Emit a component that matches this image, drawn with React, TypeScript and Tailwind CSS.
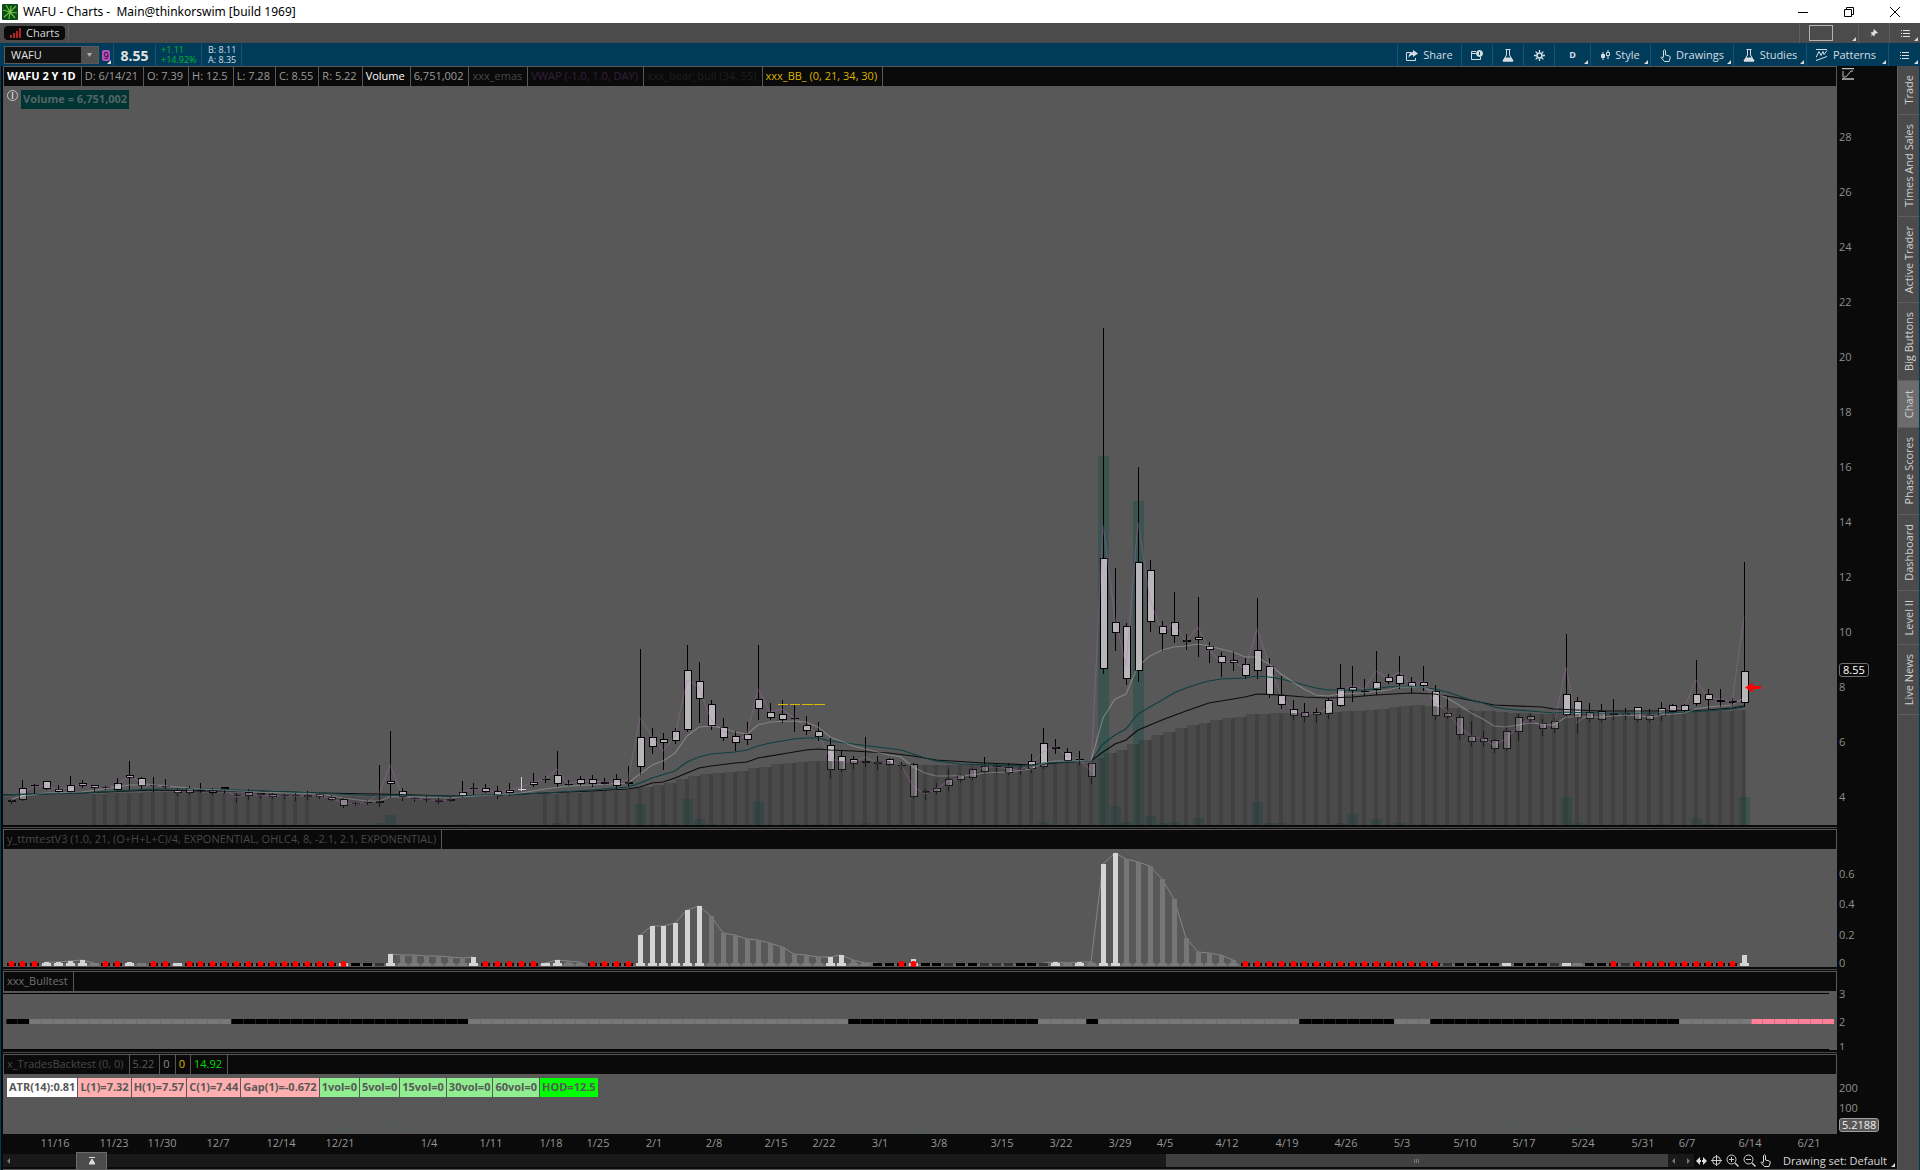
import React, { useState } from 'react';

type Candle = [high: number, top: number, bottom: number, low: number];
type Point = [index: number, y: number];

const CANDLES: Candle[] = [
  [799, 800, 802, 803], [780, 788, 800, 800], [784, 785, 786, 793], [781, 781, 789, 789], [785, 789, 792, 793],
  [776, 785, 792, 793], [780, 783, 786, 787], [785, 785, 788, 791], [786, 787, 788, 789], [778, 783, 790, 790],
  [761, 775, 778, 789], [777, 778, 786, 788], [777, 785, 786, 791], [779, 786, 787, 788], [788, 790, 793, 795],
  [786, 788, 793, 794], [783, 790, 791, 792], [788, 790, 793, 794], [787, 787, 789, 792], [793, 795, 796, 802],
  [789, 792, 796, 799], [793, 793, 795, 798], [793, 794, 797, 798], [794, 795, 796, 798], [793, 795, 796, 800],
  [791, 795, 797, 799], [793, 794, 797, 798], [795, 797, 800, 800], [798, 799, 806, 807], [802, 803, 804, 805],
  [800, 802, 803, 804], [765, 801, 803, 806], [731, 781, 784, 797], [788, 791, 797, 800], [797, 798, 799, 801],
  [796, 799, 800, 801], [798, 800, 802, 803], [797, 799, 801, 801], [781, 792, 796, 797], [783, 788, 789, 794],
  [784, 788, 792, 792], [786, 791, 796, 798], [783, 790, 793, 795], [777, 789, 790, 790], [773, 782, 785, 786],
  [776, 779, 780, 782], [751, 775, 784, 786], [780, 784, 785, 785], [776, 779, 784, 785], [775, 779, 784, 786],
  [778, 782, 784, 784], [774, 779, 786, 789], [766, 782, 784, 786], [649, 737, 767, 774], [728, 737, 747, 753],
  [733, 739, 743, 769], [728, 731, 741, 743], [645, 670, 730, 731], [662, 681, 699, 722], [700, 704, 726, 729],
  [718, 727, 738, 740], [731, 736, 743, 750], [722, 734, 740, 744], [645, 699, 709, 719], [703, 712, 718, 719],
  [700, 714, 720, 722], [705, 718, 719, 731], [716, 725, 731, 734], [722, 731, 737, 740], [738, 745, 770, 778],
  [751, 756, 770, 771], [756, 759, 764, 768], [737, 761, 763, 766], [756, 762, 764, 769], [758, 759, 765, 765],
  [762, 765, 766, 768], [763, 764, 797, 798], [789, 791, 793, 799], [783, 788, 792, 793], [769, 779, 786, 790],
  [774, 775, 780, 782], [768, 769, 778, 779], [757, 766, 772, 773], [763, 765, 767, 773], [763, 767, 773, 774],
  [765, 769, 770, 774], [754, 761, 769, 772], [728, 743, 767, 768], [739, 747, 749, 753], [748, 752, 761, 762],
  [751, 759, 760, 764], [760, 763, 777, 783], [328, 558, 669, 673], [568, 622, 633, 650], [623, 626, 679, 684],
  [467, 562, 671, 681], [560, 570, 622, 631], [621, 626, 634, 650], [592, 622, 636, 642], [634, 640, 642, 649],
  [597, 637, 640, 656], [642, 646, 650, 662], [652, 656, 663, 676], [651, 660, 663, 670], [658, 664, 676, 678],
  [598, 650, 671, 678], [658, 666, 695, 697], [676, 695, 705, 708], [700, 709, 716, 719], [703, 712, 717, 721],
  [708, 712, 715, 722], [698, 700, 714, 718], [664, 688, 706, 706], [666, 687, 691, 701], [679, 691, 692, 695],
  [651, 682, 690, 694], [674, 677, 682, 683], [656, 675, 684, 688], [677, 682, 687, 692], [666, 682, 686, 690],
  [685, 691, 716, 719], [697, 713, 717, 718], [715, 717, 735, 739], [721, 736, 742, 746], [731, 738, 742, 746],
  [739, 740, 749, 752], [727, 731, 749, 750], [714, 717, 732, 740], [714, 716, 720, 722], [719, 723, 729, 735],
  [718, 721, 729, 732], [634, 694, 715, 716], [697, 701, 718, 733], [703, 712, 719, 721], [704, 711, 720, 721],
  [699, 713, 715, 719], [708, 713, 715, 719], [707, 707, 720, 721], [709, 715, 720, 721], [702, 708, 716, 720],
  [704, 705, 712, 713], [704, 705, 711, 712], [660, 694, 704, 705], [689, 694, 700, 709], [689, 700, 702, 706],
  [698, 701, 703, 705], [562, 671, 703, 706],
];

const VWAP_PEAKS: Record<number, number> = {
  32: 765, 46: 769, 53: 718, 54: 736, 55: 751, 57: 680, 58: 687, 59: 720, 63: 689, 64: 712, 65: 709, 76: 786, 77: 794,
  92: 525, 93: 618, 94: 666, 95: 522, 96: 600, 97: 632, 98: 623, 99: 642, 100: 627, 105: 629, 106: 664, 115: 671,
  117: 672, 131: 667, 132: 723, 142: 680, 146: 617,
};

const FAST_EMA: Point[] = [
  [0, 799], [1, 796], [3, 793], [6, 792], [9, 787], [10, 785], [12, 785], [14, 787], [16, 789], [18, 790], [21, 792],
  [24, 793], [26, 794], [28, 798], [30, 801], [31, 801], [32, 797], [34, 797], [37, 798], [39, 796], [41, 795],
  [43, 793], [44, 791], [45, 789], [47, 786], [49, 785], [52, 783], [53, 774], [54, 765], [55, 761], [56, 753],
  [57, 736], [58, 727], [59, 726], [60, 728], [61, 732], [62, 734], [63, 725], [64, 722], [66, 721], [67, 722],
  [68, 727], [69, 737], [70, 741], [71, 746], [72, 749], [73, 752], [74, 755], [75, 757], [76, 767], [77, 773],
  [78, 776], [79, 776], [81, 775], [82, 773], [84, 772], [86, 769], [87, 763], [88, 761], [91, 761], [92, 718],
  [93, 699], [94, 694], [95, 666], [96, 656], [97, 650], [98, 647], [99, 646], [100, 644], [101, 646], [102, 649],
  [103, 652], [104, 657], [105, 657], [106, 664], [107, 674], [108, 682], [109, 689], [110, 695], [111, 696],
  [112, 694], [114, 693], [116, 690], [117, 687], [119, 687], [120, 692], [121, 698], [122, 705], [123, 713],
  [124, 719], [125, 726], [126, 727], [127, 725], [128, 723], [130, 725], [131, 717], [134, 717], [136, 715],
  [138, 717], [140, 714], [141, 713], [142, 709], [143, 707], [145, 705], [146, 698],
];

const MID_EMA: Point[] = [
  [-1, 795], [6, 793], [12, 789], [17, 789], [21, 791], [26, 793], [31, 796], [32, 795], [37, 796], [41, 795],
  [45, 793], [49, 790], [52, 787], [53, 783], [54, 778], [56, 771], [57, 762], [58, 757], [59, 754], [61, 752],
  [62, 750], [63, 746], [64, 743], [66, 739], [67, 738], [68, 738], [69, 741], [71, 744], [73, 747], [75, 750],
  [76, 754], [77, 758], [78, 761], [80, 764], [85, 766], [86, 766], [87, 763], [91, 761], [92, 744], [93, 735],
  [94, 729], [95, 714], [96, 707], [97, 700], [98, 693], [99, 688], [100, 684], [101, 681], [102, 679], [104, 678],
  [105, 676], [106, 677], [107, 679], [108, 682], [109, 685], [110, 688], [111, 690], [114, 690], [116, 687],
  [118, 686], [120, 689], [121, 692], [123, 700], [124, 703], [125, 707], [126, 709], [130, 713], [131, 712],
  [133, 713], [139, 713], [141, 712], [143, 711], [145, 709], [146, 707],
];

const SLOW_EMA: Point[] = [
  [-1, 795], [6, 793], [10, 791], [12, 790], [16, 791], [21, 791], [26, 793], [31, 794], [37, 796], [41, 795],
  [45, 793], [49, 791], [52, 789], [53, 787], [54, 783], [55, 782], [56, 778], [57, 773], [58, 768], [59, 766],
  [61, 763], [62, 762], [63, 758], [65, 754], [67, 750], [68, 749], [69, 750], [71, 751], [74, 753], [76, 756],
  [78, 760], [82, 763], [86, 765], [88, 763], [91, 761], [92, 752], [93, 744], [94, 740], [95, 730], [97, 720],
  [99, 711], [101, 703], [103, 699], [104, 697], [105, 694], [107, 695], [109, 697], [111, 698], [113, 697],
  [115, 695], [118, 693], [120, 694], [121, 696], [122, 698], [125, 705], [129, 707], [130, 709], [134, 711],
  [139, 711], [143, 710], [145, 708], [146, 706],
];

const CLOUD: Point[] = [
  [-1, 797], [6, 794], [10, 793], [12, 792], [21, 793], [26, 795], [31, 797], [37, 797], [41, 796], [45, 794],
  [49, 792], [52, 790], [53, 788], [54, 787], [55, 785], [56, 783], [57, 779], [58, 776], [59, 774], [61, 772],
  [62, 771], [63, 768], [64, 767], [65, 764], [67, 762], [68, 761], [74, 761], [76, 764], [78, 765], [86, 765],
  [88, 763], [91, 763], [92, 758], [93, 753], [94, 750], [95, 744], [96, 740], [97, 735], [98, 732], [99, 728],
  [100, 725], [101, 723], [102, 720], [103, 718], [104, 717], [105, 714], [108, 713], [111, 713], [113, 711],
  [115, 710], [117, 707], [119, 705], [120, 706], [122, 708], [123, 710], [126, 712], [130, 714], [142, 712],
  [146, 710],
];

const VOLUME: Point[] = [
  [10, 824], [31, 823], [32, 815], [38, 824], [46, 823], [53, 804], [55, 824], [57, 799], [58, 819], [59, 824],
  [63, 801], [66, 824], [68, 824], [72, 823], [87, 822], [92, 456], [93, 806], [94, 822], [95, 501], [96, 816],
  [97, 823], [98, 822], [100, 818], [105, 802], [106, 823], [107, 823], [112, 823], [113, 814], [115, 819],
  [117, 823], [119, 824], [131, 797], [132, 823], [136, 824], [139, 824], [142, 818], [143, 824], [146, 797],
];

// r = red dot, R = red dot on white, w = white, g = gray, k = black, d = dark
const SQUEEZE =
  'rrrwwwwgrrwgrrwrrrrrrrrrrrrrRkkdwggggggwrrrrrwwggrrrrwwwwwwggggggggggwwggkkrRkkdkkdddkkdwgwgwwggggggggggrrrrrrrrrrrrrrrrrdkkkkwkkkdwgkkrdrrrrrrrrrw';

const SQUEEZE_FILL: Record<string, string> = {
  r: '#000000', R: '#d4d4d4', w: '#d4d4d4', g: '#7a7a7a', k: '#000000', d: '#333333',
};

const MOMENTUM: Record<number, number> = {
  3: 962, 4: 962, 5: 961, 6: 960, 7: 963, 10: 962, 11: 963, 28: 962, 32: 954, 33: 955, 34: 955, 35: 956, 36: 956, 37: 957,
  38: 958, 39: 957, 46: 960, 47: 961, 48: 962, 53: 935, 54: 926, 55: 926, 56: 923, 57: 910, 58: 906, 59: 916, 60: 933,
  61: 935, 62: 939, 63: 940, 64: 943, 65: 947, 66: 954, 67: 955, 68: 957, 69: 957, 70: 955, 71: 960, 72: 963, 76: 959,
  88: 962, 89: 963, 90: 962, 91: 962, 92: 864, 93: 853, 94: 859, 95: 862, 96: 866, 97: 879, 98: 899, 99: 938, 100: 952, 101: 953,
  102: 955, 103: 960, 146: 955,
};

const MOMENTUM_RUNS = [[3, 7], [32, 39], [45, 48], [53, 73], [87, 103]];

const TREND: [from: number, to: number, fill: string][] = [
  [0, 2, '#000000'], [2, 19, '#787878'], [19, 39, '#000000'], [39, 71, '#787878'], [71, 87, '#000000'],
  [87, 91, '#787878'], [91, 92, '#000000'], [92, 109, '#787878'], [109, 117, '#000000'], [117, 120, '#787878'],
  [120, 141, '#000000'], [141, 147, '#787878'], [147, 154, '#ff8098'],
];

const DATES: [string, number][] = [
  ['11/16', 55], ['11/23', 114], ['11/30', 162], ['12/7', 218], ['12/14', 281], ['12/21', 340], ['1/4', 429],
  ['1/11', 491], ['1/18', 551], ['1/25', 598], ['2/1', 654], ['2/8', 714], ['2/15', 776], ['2/22', 824], ['3/1', 880],
  ['3/8', 939], ['3/15', 1002], ['3/22', 1061], ['3/29', 1120], ['4/5', 1165], ['4/12', 1227], ['4/19', 1287],
  ['4/26', 1346], ['5/3', 1402], ['5/10', 1465], ['5/17', 1524], ['5/24', 1583], ['5/31', 1643], ['6/7', 1687],
  ['6/14', 1750], ['6/21', 1809],
];

const SIDE_TABS = [
  'Trade', 'Times And Sales', 'Active Trader', 'Big Buttons', 'Chart', 'Phase Scores', 'Dashboard', 'Level II', 'Live News',
];

const LABELS: [string, string][] = [
  ['ATR(14):0.81', 'bg-white'],
  ['L(1)=7.32', 'bg-[#ffafaf]'],
  ['H(1)=7.57', 'bg-[#ffafaf]'],
  ['C(1)=7.44', 'bg-[#ffafaf]'],
  ['Gap(1)=-0.672', 'bg-[#ffafaf]'],
  ['1vol=0', 'bg-[#90ee90]'],
  ['5vol=0', 'bg-[#90ee90]'],
  ['15vol=0', 'bg-[#90ee90]'],
  ['30vol=0', 'bg-[#90ee90]'],
  ['60vol=0', 'bg-[#90ee90]'],
  ['HOD=12.5', 'bg-[#00ff00]'],
];

const barX = (i: number) => 11 + Math.floor(i * 11.871);

const toPoints = (points: Point[]) => points.map(([i, y]) => `${barX(i)},${y}`).join(' ');

const interpolate = (points: Point[], i: number) => {
  const next = points.findIndex(([index]) => index >= i);
  const [i1, y1] = points[next];
  if (next === 0 || i1 === i) return y1;
  const [i0, y0] = points[next - 1];
  return Math.round(y0 + ((y1 - y0) * (i - i0)) / (i1 - i0));
};

function PricePlot() {
  const vwap: Point[] = CANDLES.map((c, i) => [i, VWAP_PEAKS[i] ?? Math.round((c[0] + c[1] + c[2] + c[3]) / 4)]);

  return (
    <svg className="block h-full w-full" viewBox="3 86 1834 739" preserveAspectRatio="none">
      {VOLUME.map(([i, y]) => (
        <rect key={i} x={barX(i) - 5} y={y} width={11} height={825 - y} fill="#144e46" fillOpacity={0.42} />
      ))}
      {CANDLES.map(([high, top, bottom, low], i) => {
        const x = barX(i);
        const light = i === 43;
        return (
          <g key={i} shapeRendering="crispEdges">
            <rect x={x} y={high} width={1} height={low - high + 1} fill={light ? '#d0d0d0' : '#000'} />
            <rect x={x - 3} y={top} width={8} height={Math.max(bottom - top, 1)} fill={light ? '#d0d0d0' : '#000'} />
            {bottom - top > 2 && <rect x={x - 2} y={top + 1} width={6} height={bottom - top - 2} fill="#b9b6ba" />}
          </g>
        );
      })}
      {CANDLES.map((_, i) => {
        const x = barX(i);
        const y = interpolate(CLOUD, i);
        const striped = (i >= 7 && i <= 25) || i >= 45;
        const left = i === 0 ? 3 : barX(i - 1) + 1;
        return (
          <g key={i} fill="#313131" fillOpacity={0.36} shapeRendering="crispEdges">
            <rect x={left} y={y} width={x + 1 - left} height={825 - y} />
            {striped && <rect x={x - 2} y={y} width={4} height={825 - y} />}
          </g>
        );
      })}
      <g fill="none">
        <polyline points={toPoints(vwap)} stroke="#b070b8" strokeOpacity={0.32} strokeWidth={1.2} />
        <polyline points={toPoints(SLOW_EMA)} stroke="#0c0c0c" strokeWidth={1.2} />
        <polyline points={toPoints(MID_EMA)} stroke="#0e4040" strokeWidth={1.2} />
        <polyline points={toPoints(FAST_EMA)} stroke="#c8c8c8" strokeOpacity={0.38} strokeWidth={1.2} />
      </g>
      <path d="M778 704.5h10m2 0h10m2 0h11m1 0h11" stroke="#dcb800" />
      <path d="M1745 687.500l8-5v3.500h8v3h-8v3.500z" fill="#ff0000" />
    </svg>
  );
}

function MomentumPlot() {
  return (
    <svg className="block h-full w-full" viewBox="3 849 1834 118" preserveAspectRatio="none">
      {MOMENTUM_RUNS.map(([from, to]) => (
        <polyline
          key={from}
          fill="none"
          stroke="#858585"
          points={toPoints(Array.from({ length: to - from + 1 }, (_, n) => [from + n, MOMENTUM[from + n] ?? 963]))}
        />
      ))}
      {Object.entries(MOMENTUM).map(([key, y]) => {
        const i = Number(key);
        const white = SQUEEZE[i] === 'w' || SQUEEZE[i] === 'R';
        return <rect key={key} x={barX(i) - 2} y={y} width={5} height={966 - y} fill={white ? '#d4d4d4' : '#767676'} />;
      })}
      <rect x={6} y={964} width={1742} height={2} fill="#6a6a6a" />
      {SQUEEZE.split('').map((kind, i) => (
        <rect key={i} x={barX(i) - 4} y={963} width={9} height={3} fill={SQUEEZE_FILL[kind]} />
      ))}
      {SQUEEZE.split('').map((kind, i) =>
        kind.toLowerCase() === 'r' ? <circle key={i} cx={barX(i) + 0.5} cy={964} r={3} fill="#ff0000" /> : null
      )}
    </svg>
  );
}

function TrendPlot() {
  const edge = (i: number) => 6 + Math.floor(i * 11.871);
  return (
    <svg className="block h-full w-full" viewBox="3 991 1834 59" preserveAspectRatio="none">
      <path d="M3 993.5H1829M3 1049.5H1829" stroke="#000" />
      {TREND.map(([from, to, fill]) => (
        <rect key={from} x={edge(from)} y={1019} width={edge(to) - edge(from)} height={5} fill={fill} />
      ))}
      {Array.from({ length: 154 }, (_, i) => (
        <rect key={i} x={edge(i)} y={1019} width={1} height={5} fill="#585858" fillOpacity={0.35} />
      ))}
    </svg>
  );
}

function BacktestPlot() {
  return (
    <svg className="block h-full w-full" viewBox="3 1074 1834 60" preserveAspectRatio="none">
      <path
        d="M18 1125h12M138 1129h12M333 1129h18M380 1126l10-3 8 4 8 3h8M632 1126l9-6 9 6M678 1125l10-5 9 6M718 1130h10M750 1125h16M822 1130h12l10-5M904 1129l10 3 12-3M1032 1125h18M1086 1130l8-4 9-31 10 35 14 2 12-14 13 14h8M1252 1125h12l12 5M1432 1130h12M1504 1125h16M1560 1125l12 4 10 2M1738 1126l8-3"
        fill="none"
        stroke="#46644a"
        strokeDasharray="3 2"
      />
    </svg>
  );
}

interface AxisProps {
  ticks: [string, number][];
  top: number;
  height: number;
  children?: React.ReactNode;
}

function Axis({ ticks, top, height, children }: AxisProps) {
  return (
    <div className="relative w-[60px] shrink-0 overflow-hidden bg-[#0a0a0a]">
      <svg className="absolute inset-0 h-full w-full">
        {ticks.map(([label, y]) => (
          <text key={label} x={2} y={`${((y - top) / height) * 100}%`} dy={4} fontSize={11} fill="#8e8e8e">
            {label}
          </text>
        ))}
      </svg>
      {children}
    </div>
  );
}

function PlotHeader({ items }: { items: [string, string][] }) {
  return (
    <div className="flex h-5 shrink-0 border-t border-l border-r border-[#585858] bg-[#0a0a0a]">
      {items.map(([text, style], i) => (
        <span key={i} className={`border-r border-[#585858] pr-[5px] pl-[3px] leading-[18px] whitespace-pre ${style}`}>
          {text}
        </span>
      ))}
    </div>
  );
}

function Divider() {
  return (
    <div className="flex h-1 shrink-0 items-center bg-[#0a0a0a]">
      <div className="mr-[60px] h-px flex-1 bg-[#484848]" />
    </div>
  );
}

function Corner() {
  return (
    <svg className="absolute right-[2px] bottom-[2px]" width="4" height="4">
      <path d="M4 0v4H0z" fill="#d8d8d8" />
    </svg>
  );
}

function FlaskIcon() {
  return (
    <svg width="12" height="13" viewBox="0 0 12 13" fill="none" stroke="#d6dde2">
      <path d="M3.500.5h5M4.500 1v5L1 12h10L7.500 6V1" />
      <path d="M3 9h6l2 3H1z" fill="#d6dde2" />
    </svg>
  );
}

function ListIcon() {
  return (
    <svg width="9" height="9" viewBox="0 0 9 9" stroke="#dddddd">
      <path d="M0 1.500h1M2 1.500h7M0 4.500h1M2 4.500h7M0 7.500h1M2 7.500h7" />
    </svg>
  );
}

function HandIcon() {
  return (
    <svg width="11" height="13" viewBox="0 0 11 13" fill="none" stroke="#d6dde2" strokeLinejoin="round">
      <path d="M3.500 8V1.500q1-1.500 2 0V6l4 1q1 .5.7 2L9 12.500H4.500L1 8.500q0-1.500 2.500.5" />
    </svg>
  );
}

interface ToolProps {
  label: string;
  text?: boolean;
  corner?: boolean;
  className: string;
  children?: React.ReactNode;
}

function Tool({ label, text, corner, className, children }: ToolProps) {
  return (
    <button
      type="button"
      aria-label={label}
      className={`relative flex h-full items-center justify-center gap-[5px] border-l border-[#1d5270] text-[#d6dde2] ${className}`}
    >
      {children}
      {text ? <span>{label}</span> : null}
      {corner ? <Corner /> : null}
    </button>
  );
}

function TitleBar() {
  return (
    <header className="flex h-[23px] shrink-0 items-center bg-white pr-[2px] text-black">
      <svg className="ml-[2px]" width="16" height="16" viewBox="0 0 16 16">
        <rect width="16" height="16" rx="1" fill="#0b4d12" />
        <path d="M7 15l1-7M8 8L4 1M8 8l6-6M8 8L1 6M8 8l7 1M8 8l-6 5M8 8l5 6M8 8l1-6" stroke="#6cc048" strokeWidth="1.200" />
      </svg>
      <h1 className="ml-[5px] flex-1 font-['Noto_Sans'] text-[12px] whitespace-pre">
        WAFU - Charts -  Main@thinkorswim [build 1969]
      </h1>
      <button type="button" aria-label="Minimize" className="flex w-[46px] justify-center">
        <svg width="10" height="10"><path d="M0 5.500h10" stroke="#000" /></svg>
      </button>
      <button type="button" aria-label="Restore" className="flex w-[46px] justify-center">
        <svg width="10" height="10" fill="none" stroke="#000"><path d="M.5 2.500h7v7h-7zM2.500 2.500v-2h7v7h-2" /></svg>
      </button>
      <button type="button" aria-label="Close" className="flex w-[46px] justify-center">
        <svg width="10" height="10"><path d="M0 0l10 10M10 0L0 10" stroke="#000" /></svg>
      </button>
    </header>
  );
}

function TabBar() {
  return (
    <nav className="flex h-5 shrink-0 items-stretch bg-[#4b4b4b]">
      <div className="flex items-center border-r border-[#5e5e5e] pr-[3px] pl-1">
        <button type="button" className="flex h-[14px] items-center gap-[5px] rounded bg-[#0a0a0a] px-[6px] text-[#d8d8d8]">
          <svg width="11" height="10" fill="#b22222">
            <path d="M0 7h2v3H0zM3 5h2v5H3zM6 3h2v7H6zM9 0h2v10H9z" />
          </svg>
          Charts
        </button>
      </div>
      <div className="flex-1" />
      <button type="button" aria-label="Layout grid" className="relative flex w-[59px] items-center border-l border-[#5e5e5e] pl-[9px]">
        <span className="h-4 w-6 border border-[#b4b4b4]" />
        <Corner />
      </button>
      <button type="button" aria-label="Pin" className="flex w-[31px] items-center justify-center border-l border-[#5e5e5e]">
        <svg width="8" height="8" viewBox="0 0 8 8"><path d="M4 0l4 4-1 .5-1-.3L4.500 6l.2 1-.7.3L2.500 6 0 8l2-2.500L.7 4l.3-.7 1 .2L3.800 2 3.500 1z" fill="#ddd" /></svg>
      </button>
      <button type="button" aria-label="Menu" className="relative flex w-[31px] items-center justify-center border-l border-[#5e5e5e]">
        <ListIcon />
        <Corner />
      </button>
    </nav>
  );
}

function Toolbar() {
  const [symbol, setSymbol] = useState('WAFU');

  return (
    <div className="flex h-[23px] shrink-0 items-center bg-[#003c5a] pt-px pl-1">
      <div className="flex h-[18px] w-[95px] border border-[#5a5a5a] bg-[#111111]">
        <input
          aria-label="Symbol"
          value={symbol}
          onChange={(e) => setSymbol(e.target.value)}
          className="w-0 flex-1 bg-transparent pl-[6px] text-[#e0e0e0] outline-none"
        />
        <button type="button" aria-label="Symbol list" className="flex w-[17px] items-center justify-center bg-[#505050]">
          <svg width="5" height="4"><path d="M0 0h5L2.500 4z" fill="#b0b0b0" /></svg>
        </button>
      </div>
      <button type="button" aria-label="Link group 9" className="relative ml-[3px] flex h-full w-[11px] items-center">
        <span className="flex h-[11px] w-2 items-center justify-center rounded-xs bg-[#b84fc0] text-[9px] leading-none text-black">9</span>
        <Corner />
      </button>
      <strong className="flex h-full w-[42px] items-center justify-center border-l border-[#1d5270] text-[14px] text-[#e2e2e2]">8.55</strong>
      <div className="h-full w-[46px] border-l border-[#1d5270] pt-px pl-[5px] text-[9px] leading-[10px] text-[#00b82c]">
        <div>+1.11</div>
        <div>+14.92%</div>
      </div>
      <div className="h-full w-[41px] border-x border-[#1d5270] pt-px pl-[6px] text-[9px] leading-[10px] text-[#d6dde2]">
        <div>B: 8.11</div>
        <div>A: 8.35</div>
      </div>
      <div className="flex-1" />
      <Tool label="Share" text className="w-16">
        <svg width="12" height="11" viewBox="0 0 12 11" fill="none" stroke="#d6dde2">
          <path d="M5 2.500H.5v8h9V8" />
          <path d="M7 0l5 3.500L7 7V5Q4 5 2.500 8 2.500 2.500 7 2z" fill="#d6dde2" stroke="none" />
        </svg>
      </Tool>
      <Tool label="Detach" className="w-[31px]">
        <svg width="12" height="10" viewBox="0 0 12 10" fill="none" stroke="#d6dde2">
          <path d="M5 1.500H.5v8h9V7M.5 3.500H5" />
          <circle cx="8.500" cy="3.500" r="3" fill="#d6dde2" />
          <path d="M8.500 2v3" stroke="#003c5a" />
        </svg>
      </Tool>
      <Tool label="Lab" className="w-[31px]"><FlaskIcon /></Tool>
      <Tool label="Settings" className="w-[31px]">
        <svg width="11" height="11" viewBox="0 0 11 11" fill="none" stroke="#d6dde2">
          <circle cx="5.500" cy="5.500" r="2.500" strokeWidth="1.600" />
          <path d="M5.500 0v2.500M5.500 8.500V11M0 5.500h2.500M8.500 5.500H11M1.600 1.600l1.800 1.800M7.600 7.600l1.800 1.800M9.400 1.600L7.600 3.400M3.400 7.600L1.600 9.400" strokeWidth="1.300" />
        </svg>
      </Tool>
      <Tool label="Day" corner className="w-9"><span className="text-[9px] font-bold">D</span></Tool>
      <Tool label="Style" text corner className="w-[60px]">
        <svg width="9" height="10" viewBox="0 0 9 10" fill="none" stroke="#d6dde2">
          <path d="M2 2v8M7 0v9" />
          <path d="M.5 4.500h3v3h-3z" fill="#d6dde2" />
          <path d="M5.500 2.500h3v3h-3z" fill="#003c5a" />
        </svg>
      </Tool>
      <Tool label="Drawings" text corner className="w-[83px]"><HandIcon /></Tool>
      <Tool label="Studies" text corner className="w-[73px]"><FlaskIcon /></Tool>
      <Tool label="Patterns" text corner className="w-[82px] pr-[3px]">
        <svg width="12" height="12" viewBox="0 0 12 12" fill="none" stroke="#d6dde2">
          <path d="M0 .5h11M0 8.500l3-6 2 4 2-4 1 3 3-4M0 11.500L11 7.500" />
        </svg>
      </Tool>
      <Tool label="Menu" corner className="w-8"><ListIcon /></Tool>
    </div>
  );
}

function SideTabs() {
  const [active, setActive] = useState('Chart');
  return (
    <aside className="flex w-[23px] shrink-0 flex-col border-r border-l border-r-[#003c5a] border-l-[#5e5e5e] bg-[#4b4b4b]">
      {SIDE_TABS.map((tab) => (
        <button
          key={tab}
          type="button"
          onClick={() => setActive(tab)}
          className={`flex items-center justify-center border-b border-[#5e5e5e] py-[9px] leading-5 text-[#cfcfcf] ${active === tab ? 'bg-[#6c6c6c]' : ''}`}
        >
          <span className="rotate-180 [writing-mode:vertical-rl]">{tab}</span>
        </button>
      ))}
    </aside>
  );
}

function BottomBar() {
  return (
    <footer className="flex h-[18px] shrink-0 items-center border-b border-[#585858] bg-[#0a0a0a]">
      <div className="flex h-[13px] w-[73px] items-center bg-[#191919] pl-1">
        <svg width="3" height="6"><path d="M3 0v6L0 3z" fill="#777" /></svg>
      </div>
      <button type="button" aria-label="Show panel" className="flex h-full w-[31px] items-center justify-center border border-b-0 border-[#6a6a6a] bg-[#4b4b4b]">
        <svg width="6" height="8"><path d="M0 .5h6M3 2l3 5H0z" fill="#ddd" stroke="#ddd" strokeWidth="1" /></svg>
      </button>
      <div className="h-[13px] flex-[1058] bg-[#191919]" />
      <div className="flex h-[13px] flex-[502] items-center justify-center bg-[#404040]">
        <svg width="5" height="4"><path d="M.5 0v4M2.500 0v4M4.500 0v4" stroke="#777" /></svg>
      </div>
      <div className="flex h-[13px] w-[26px] items-center justify-between bg-[#191919] px-1">
        <svg width="3" height="6"><path d="M3 0v6L0 3z" fill="#777" /></svg>
        <svg width="3" height="6"><path d="M0 0v6l3-3z" fill="#777" /></svg>
      </div>
      <div className="ml-[2px] flex items-center gap-1">
        <button type="button" aria-label="Expand">
          <svg className="block" width="11" height="8" viewBox="0 0 11 8"><path d="M0 4l4-4v3h3V0l4 4-4 4V5H4v3z" fill="#ddd" /><path d="M5.500 1v6" stroke="#0a0a0a" /></svg>
        </button>
        <button type="button" aria-label="Crosshair">
          <svg className="block" width="11" height="11" fill="none" stroke="#ccc"><circle cx="5.500" cy="5.500" r="4" /><path d="M5.500 0v11M0 5.500h11" /></svg>
        </button>
        <button type="button" aria-label="Zoom in">
          <svg className="block" width="13" height="13" fill="none" stroke="#ccc"><circle cx="5.500" cy="5.500" r="4.500" /><path d="M5.500 3v5M3 5.500h5" /><path d="M9 9l3.500 3.500" strokeWidth="1.500" /></svg>
        </button>
        <button type="button" aria-label="Zoom out">
          <svg className="block" width="13" height="13" fill="none" stroke="#ccc"><circle cx="5.500" cy="5.500" r="4.500" /><path d="M3 5.500h5" /><path d="M9 9l3.500 3.500" strokeWidth="1.500" /></svg>
        </button>
        <button type="button" aria-label="Pan"><HandIcon /></button>
      </div>
      <button type="button" className="relative ml-3 h-full pr-[10px] leading-4 text-[#d8d8d8]">
        Drawing set: Default
        <Corner />
      </button>
    </footer>
  );
}

export default function App() {
  return (
    <div className="flex h-screen flex-col overflow-hidden bg-[#0a0a0a] font-['Open_Sans','Noto_Sans',sans-serif] text-[11px]">
      <TitleBar />
      <TabBar />
      <Toolbar />
      <div className="flex min-h-0 flex-1">
        <main className="flex min-w-0 flex-1 flex-col border-l border-[#003c5a] pl-[2px]">
          <section className="flex min-h-0 flex-1">
            <div className="flex min-w-0 flex-1 flex-col bg-[#585858]">
              <PlotHeader
                items={[
                  ['WAFU 2 Y 1D', 'font-bold text-white'],
                  ['D: 6/14/21', 'text-[#9a9a9a]'],
                  ['O: 7.39', 'text-[#9a9a9a]'],
                  ['H: 12.5', 'text-[#9a9a9a]'],
                  ['L: 7.28', 'text-[#9a9a9a]'],
                  ['C: 8.55', 'text-[#9a9a9a]'],
                  ['R: 5.22', 'text-[#9a9a9a]'],
                  ['Volume', 'text-white'],
                  ['6,751,002', 'text-[#9a9a9a]'],
                  ['xxx_emas', 'text-[#484848]'],
                  ['VWAP (-1.0, 1.0, DAY)', 'text-[#32203a]'],
                  ['xxx_bear_bull (34, 55)', 'text-[#1e1e1e]'],
                  ['xxx_BB_ (0, 21, 34, 30)', 'text-[#d9b400]'],
                ]}
              />
              <div className="relative min-h-0 flex-1">
                <PricePlot />
                <div className="absolute top-1 left-1 flex items-start gap-[3px]">
                  <svg width="11" height="11" fill="none" stroke="#c4c4c4">
                    <circle cx="5.500" cy="5.500" r="5" />
                    <path d="M5.500 2v7" strokeWidth="1.500" />
                  </svg>
                  <span className="bg-[#003333] px-[2px] pb-px leading-[18px] font-bold text-[#566666]">Volume = 6,751,002</span>
                </div>
              </div>
            </div>
            <Axis
              top={66}
              height={759}
              ticks={[
                ['28', 137], ['26', 192], ['24', 247], ['22', 302], ['20', 357], ['18', 412], ['16', 467], ['14', 522],
                ['12', 577], ['10', 632], ['8', 687], ['4', 797], ['6', 742],
              ]}
            >
              <svg className="absolute top-[2px] left-[5px]" width="12" height="12" fill="none" stroke="#bdbdbd">
                <path d="M0 .5h12M0 11h12" strokeWidth="1.500" />
                <path d="M1 3v6M1 9h3l5-6h2" />
              </svg>
              <span className="absolute top-[78.600%] left-[2px] rounded-[3px] border border-[#707070] px-[3px] leading-3 text-white">8.55</span>
            </Axis>
          </section>
          <Divider />
          <section className="flex h-[138px] shrink-0">
            <div className="flex min-w-0 flex-1 flex-col bg-[#585858]">
              <PlotHeader items={[['y_ttmtestV3 (1.0, 21, (O+H+L+C)/4, EXPONENTIAL, OHLC4, 8, -2.1, 2.1, EXPONENTIAL)', 'text-[#484848]']]} />
              <div className="min-h-0 flex-1"><MomentumPlot /></div>
            </div>
            <Axis top={829} height={138} ticks={[['0.6', 874], ['0.4', 904], ['0.2', 935], ['0', 963]]} />
          </section>
          <Divider />
          <section className="flex h-[79px] shrink-0">
            <div className="flex min-w-0 flex-1 flex-col bg-[#585858]">
              <PlotHeader items={[['xxx_Bulltest', 'text-[#707070]']]} />
              <div className="min-h-0 flex-1"><TrendPlot /></div>
            </div>
            <Axis top={971} height={79} ticks={[['3', 994], ['2', 1022], ['1', 1047]]} />
          </section>
          <Divider />
          <section className="flex h-20 shrink-0">
            <div className="flex min-w-0 flex-1 flex-col bg-[#585858]">
              <PlotHeader
                items={[
                  ['x_TradesBacktest (0, 0)', 'text-[#484848]'],
                  ['5.22', 'text-[#585858]'],
                  ['0', 'text-[#8a8a8a]'],
                  ['0', 'text-[#d9b400]'],
                  ['14.92', 'text-[#00dd00]'],
                ]}
              />
              <div className="relative min-h-0 flex-1">
                <BacktestPlot />
                <div className="absolute top-1 left-1 flex gap-px leading-[18px] font-bold text-[#585858]">
                  {LABELS.map(([label, bg]) => (
                    <span key={label} className={`px-[2px] pb-px ${bg}`}>{label}</span>
                  ))}
                </div>
              </div>
            </div>
            <Axis top={1054} height={80} ticks={[['200', 1088], ['100', 1108]]}>
              <span className="absolute bottom-[2px] left-[2px] rounded-[3px] border border-[#a0a0a0] bg-[#585858] px-[2px] leading-3 text-[#f0f0f0]">5.2188</span>
            </Axis>
          </section>
          <div className="flex h-[18px] shrink-0">
            <svg className="h-full w-0 flex-1 overflow-visible">
              {DATES.map(([label, x]) => (
                <text key={label} x={`${((x - 3) / 1834) * 100}%`} y={13} fontSize={11} textAnchor="middle" fill="#969696">
                  {label}
                </text>
              ))}
            </svg>
            <div className="w-[60px]" />
          </div>
          <BottomBar />
        </main>
        <SideTabs />
      </div>
    </div>
  );
}
